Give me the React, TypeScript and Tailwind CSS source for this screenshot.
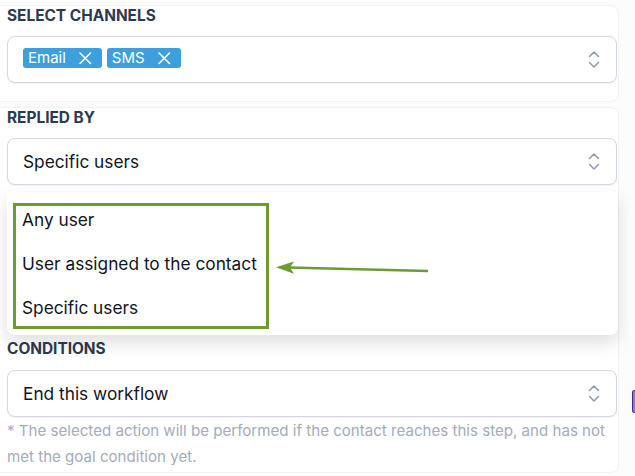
import React from "react";

const Chevrons = () => (
  <svg width="12" height="19" viewBox="0 0 12 19" fill="none" className="shrink-0">
    <path d="M1.5 6.5 L6 2 L10.5 6.5" stroke="#8f9bb3" strokeWidth="1.6" strokeLinecap="round" strokeLinejoin="round" />
    <path d="M1.5 12.5 L6 17 L10.5 12.5" stroke="#8f9bb3" strokeWidth="1.6" strokeLinecap="round" strokeLinejoin="round" />
  </svg>
);

const XIcon = () => (
  <svg width="14" height="14" viewBox="0 0 14 14" fill="none" className="ml-[12px] shrink-0">
    <path d="M2 2 L12.5 12.5 M12.5 2 L2 12.5" stroke="white" strokeWidth="1.6" strokeLinecap="round" />
  </svg>
);

const Tag = ({ label }: { label: string }) => (
  <div className="flex items-center h-[20px] mb-[4px] rounded-[3px] bg-[#3d9fdc] pl-[5px] pr-[10px] text-white text-[15px] leading-[20px]">
    <span>{label}</span>
    <XIcon />
  </div>
);

const Label = ({ children }: { children: React.ReactNode }) => (
  <div className="h-[20px] text-[15.4px] leading-[20px] font-bold text-[#2e3a4d]">{children}</div>
);

const Select = ({ children }: { children: React.ReactNode }) => (
  <div className="flex items-center justify-between h-[47px] rounded-lg border border-[#d3d8e0] bg-white pl-[15px] pr-[16px] shadow-[0_1px_2px_rgba(16,24,40,0.06)]">
    <div className="flex items-center gap-[5px] text-[17.3px] text-[#0f1523]">{children}</div>
    <Chevrons />
  </div>
);

export default function App() {
  return (
    <div className="relative w-[635px] h-[476px] overflow-hidden bg-[#fcfcfc]" style={{ fontFamily: "Inter, 'Noto Sans', sans-serif" }}>
      <div className="ml-[-8px] w-[627px] flex flex-col">
        {/* Card 1 */}
        <div className="mt-[5px] h-[97px] rounded-lg border border-[#f1f2f4] bg-white pl-[14px] pr-[1px]">
          <Label>SELECT CHANNELS</Label>
          <div className="mt-[10px]">
            <Select>
              <Tag label="Email" />
              <Tag label="SMS" />
            </Select>
          </div>
        </div>
        {/* Card 2 */}
        <div className="mt-[5px] h-[366px] rounded-lg border border-[#f1f2f4] bg-white pl-[14px] pr-[1px]">
          <Label>REPLIED BY</Label>
          <div className="mt-[10px]">
            <Select>Specific users</Select>
          </div>
          <div className="h-[154px]" />
          <Label>CONDITIONS</Label>
          <div className="mt-[11px]">
            <Select>End this workflow</Select>
          </div>
          <p className="mt-[1px] text-[15.1px] leading-[26px] text-[#a3acbb]">
            * The selected action will be performed if the contact reaches this step, and has not met the goal condition yet.
          </p>
        </div>
      </div>

      {/* Dropdown menu */}
      <div className="absolute left-[7px] top-[192px] w-[611px] h-[143px] rounded-b-lg bg-white shadow-[0_8px_18px_rgba(0,0,0,0.13)] pl-[15px] pt-[6px] text-[17.3px] text-[#0f1523]">
        <div className="h-[44px] flex items-center">Any user</div>
        <div className="h-[44px] flex items-center">User assigned to the contact</div>
        <div className="h-[44px] flex items-center">Specific users</div>
      </div>

      {/* Green annotation box */}
      <div className="absolute left-[13px] top-[203px] w-[256px] h-[126px] border-[3px] border-[#6a9c33]" />

      {/* Green arrow */}
      <svg className="absolute left-0 top-0" width="635" height="476" viewBox="0 0 635 476" fill="none">
        <line x1="289" y1="267.5" x2="428" y2="271" stroke="#6a9c33" strokeWidth="2.6" />
        <polygon points="276,267.3 294,261.5 290,267.5 294,273.8" fill="#6a9c33" />
      </svg>

      {/* Purple element at right edge */}
      <div className="absolute left-[632px] top-[390px] w-[8px] h-[23px] rounded-[2px] bg-[#8679e2] border border-[#3b2f8f]" />
    </div>
  );
}
